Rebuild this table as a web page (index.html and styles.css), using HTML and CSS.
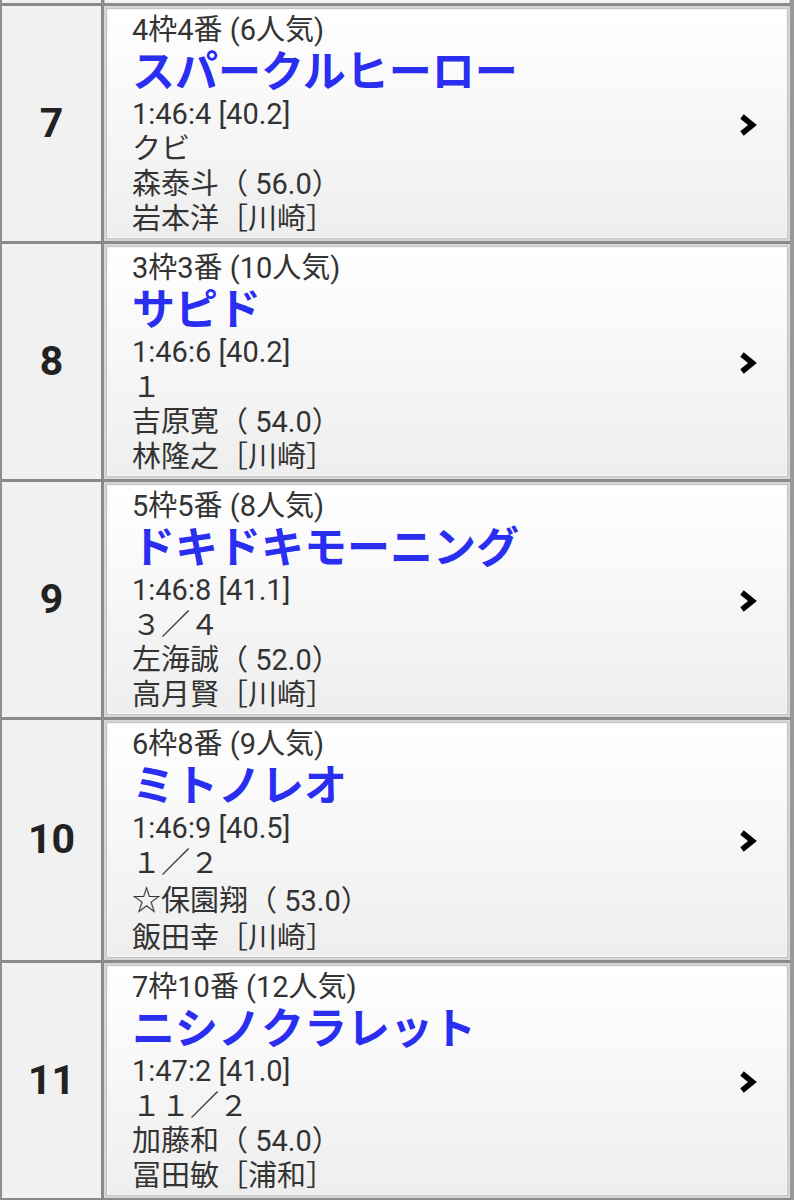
FILE: index.html
```html
<!DOCTYPE html>
<html lang="ja">
<head>
<meta charset="utf-8">
<link rel="stylesheet" href="styles.css">
</head>
<body>
<div class="table">
  <div class="row stub">
    <div class="num"></div>
    <div class="cell"><div class="card"></div></div>
  </div>

  <div class="row">
    <div class="num">7</div>
    <div class="cell">
      <div class="card">
        <div class="info">
          <div class="line">4枠4番 (6人気)</div>
          <div class="name">スパークルヒーロー</div>
          <div class="line">1:46:4 [40.2]</div>
          <div class="line sm">クビ</div>
          <div class="line sm">森泰斗（ 56.0）</div>
          <div class="line sm">岩本洋［川崎］</div>
        </div>
        <svg class="chev" width="18" height="24" viewBox="0 0 18 24"><polyline points="3,3.5 13.5,12 3,20.5" fill="none" stroke="#000" stroke-width="5.5" stroke-linejoin="miter"/></svg>
      </div>
    </div>
  </div>

  <div class="row">
    <div class="num">8</div>
    <div class="cell">
      <div class="card">
        <div class="info">
          <div class="line">3枠3番 (10人気)</div>
          <div class="name">サピド</div>
          <div class="line">1:46:6 [40.2]</div>
          <div class="line sm">１</div>
          <div class="line sm">吉原寛（ 54.0）</div>
          <div class="line sm">林隆之［川崎］</div>
        </div>
        <svg class="chev" width="18" height="24" viewBox="0 0 18 24"><polyline points="3,3.5 13.5,12 3,20.5" fill="none" stroke="#000" stroke-width="5.5" stroke-linejoin="miter"/></svg>
      </div>
    </div>
  </div>

  <div class="row">
    <div class="num">9</div>
    <div class="cell">
      <div class="card">
        <div class="info">
          <div class="line">5枠5番 (8人気)</div>
          <div class="name">ドキドキモーニング</div>
          <div class="line">1:46:8 [41.1]</div>
          <div class="line sm">３／４</div>
          <div class="line sm">左海誠（ 52.0）</div>
          <div class="line sm">高月賢［川崎］</div>
        </div>
        <svg class="chev" width="18" height="24" viewBox="0 0 18 24"><polyline points="3,3.5 13.5,12 3,20.5" fill="none" stroke="#000" stroke-width="5.5" stroke-linejoin="miter"/></svg>
      </div>
    </div>
  </div>

  <div class="row">
    <div class="num">10</div>
    <div class="cell">
      <div class="card">
        <div class="info">
          <div class="line">6枠8番 (9人気)</div>
          <div class="name">ミトノレオ</div>
          <div class="line">1:46:9 [40.5]</div>
          <div class="line sm">１／２</div>
          <div class="line tall">☆保園翔（ 53.0）</div>
          <div class="line sm">飯田幸［川崎］</div>
        </div>
        <svg class="chev" width="18" height="24" viewBox="0 0 18 24"><polyline points="3,3.5 13.5,12 3,20.5" fill="none" stroke="#000" stroke-width="5.5" stroke-linejoin="miter"/></svg>
      </div>
    </div>
  </div>

  <div class="row">
    <div class="num">11</div>
    <div class="cell">
      <div class="card">
        <div class="info">
          <div class="line">7枠10番 (12人気)</div>
          <div class="name">ニシノクラレット</div>
          <div class="line">1:47:2 [41.0]</div>
          <div class="line sm">１１／２</div>
          <div class="line sm">加藤和（ 54.0）</div>
          <div class="line sm">冨田敏［浦和］</div>
        </div>
        <svg class="chev" width="18" height="24" viewBox="0 0 18 24"><polyline points="3,3.5 13.5,12 3,20.5" fill="none" stroke="#000" stroke-width="5.5" stroke-linejoin="miter"/></svg>
      </div>
    </div>
  </div>
</div>
</body>
</html>
```

FILE: styles.css
```css
html, body {
  margin: 0;
  padding: 0;
  background: #fff;
}

body {
  font-family: Roboto, "Noto Sans CJK JP", sans-serif;
  color: #333;
}

.table {
  width: 794px;
  box-sizing: border-box;
  border-left: 2px solid #8e8e8e;
  border-right: 4px solid #999;
  border-bottom: 3px solid #8a8a8a;
}

.row {
  display: grid;
  grid-template-columns: 102px 1fr;
  border-top: 3px solid #8a8a8a;
}

.row.stub {
  border-top: 0;
  height: 3px;
  overflow: hidden;
}

.row.stub .cell {
  padding: 0;
}

.row.stub .card {
  height: 3px;
  padding: 0;
  border-top: 0;
  background: #f0f0f0;
}

.num {
  background: #f1f1f1;
  border-right: 3px solid #8a8a8a;
  display: flex;
  align-items: center;
  justify-content: center;
  font-size: 41px;
  font-weight: 700;
  color: #222;
  padding-bottom: 2px;
  box-sizing: border-box;
}

.cell {
  background: #d6d6d6;
  padding: 2px 2px 2px 2px;
}

.card {
  display: flex;
  align-items: center;
  border: 1px solid #c4c4c4;
  background: linear-gradient(#ffffff, #eeeeee);
  padding: 3px 0 1px 25px;
  box-shadow: inset 0 0 0 1px #f6f6f6;
}

.info {
  flex: 1;
}

.line {
  font-size: 29px;
  line-height: 36px;
  height: 36px;
  white-space: nowrap;
  color: #333;
}

.line.sm {
  height: 35px;
  line-height: 35px;
}

.line.tall {
  height: 40px;
  line-height: 40px;
}

.name {
  font-size: 43px;
  line-height: 48px;
  height: 48px;
  font-weight: 700;
  color: #2a2ef0;
  white-space: nowrap;
}

.chev {
  margin-right: 30px;
  flex: none;
}
```
